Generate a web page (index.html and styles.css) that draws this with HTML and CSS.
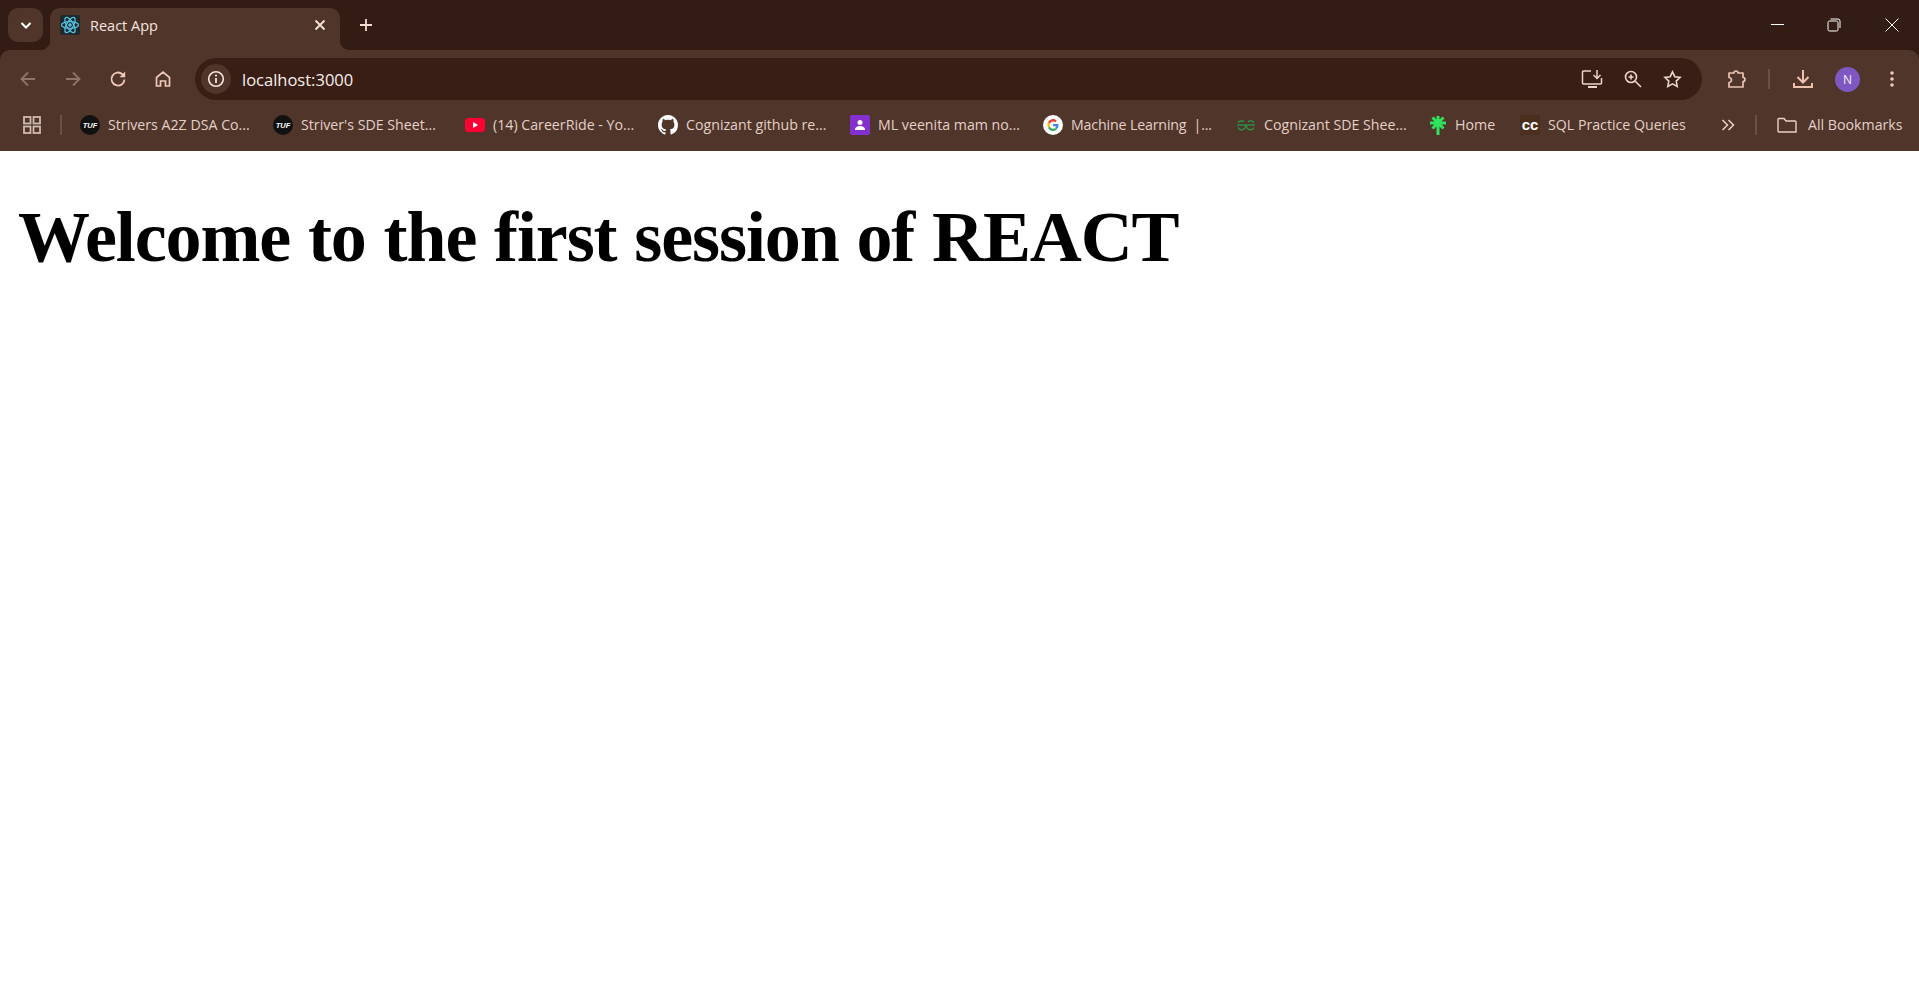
FILE: index.html
```html
<!DOCTYPE html>
<html lang="en">
<head>
    <meta charset="UTF-8">
    <title>React App</title>
    <link rel="stylesheet" href="styles.css">
</head>
<body>
    <div class="chrome">
    <div class="tabstrip">
        <div class="tabsearch">
            <svg width="16" height="16" viewBox="0 0 16 16"><path d="M3.500 6 8 10.500 12.500 6" fill="none" stroke="#fff" stroke-width="2"/></svg>
        </div>
        <div class="tab">
            <svg class="tabicon" width="20" height="20" viewBox="0 0 20 20">
                <rect width="20" height="20" rx="2" fill="#1f2a2e"/>
                <g fill="none" stroke="#53c1de" stroke-width="1.300">
                    <ellipse cx="10" cy="10" rx="8.500" ry="3.400"/>
                    <ellipse cx="10" cy="10" rx="8.500" ry="3.400" transform="rotate(60 10 10)"/>
                    <ellipse cx="10" cy="10" rx="8.500" ry="3.400" transform="rotate(120 10 10)"/>
                </g>
                <circle cx="10" cy="10" r="1.800" fill="#53c1de"/>
            </svg>
            <span class="tabtitle">React App</span>
            <svg class="tabclose" width="12" height="12" viewBox="0 0 12 12"><path d="M1.500 1.500 10.500 10.500M10.500 1.500 1.500 10.500" stroke="#f3e4de" stroke-width="1.800"/></svg>
        </div>
        <svg class="newtab" width="14" height="14" viewBox="0 0 14 14"><path d="M7 1v12M1 7h12" stroke="#f6dcd2" stroke-width="1.800"/></svg>
        <div class="winbtns">
            <svg width="14" height="14" viewBox="0 0 14 14"><path d="M0 6.500h13" stroke="#fff" stroke-width="1"/></svg>
            <svg class="restore" width="14" height="14" viewBox="0 0 14 14" fill="none" stroke="#fff"><rect x="1" y="3" width="10" height="10" rx="1.500"/><path d="M3.500 1h7.500a2 2 0 0 1 2 2v7"/></svg>
            <svg width="14" height="14" viewBox="0 0 14 14"><path d="M.5.500 13.500 13.500M13.500.500 .5 13.500" stroke="#fff" stroke-width="1"/></svg>
        </div>
    </div>

    <div class="toolbar">
        <svg class="tb" width="18" height="18" viewBox="0 0 18 18"><path d="M16 9H2.500M9 2.500 2.500 9 9 15.500" fill="none" stroke="#8d756b" stroke-width="1.800"/></svg>
        <svg class="tb" width="18" height="18" viewBox="0 0 18 18"><path d="M2 9h13.500M9 2.500 15.500 9 9 15.500" fill="none" stroke="#8d756b" stroke-width="1.800"/></svg>
        <svg class="tb" width="18" height="18" viewBox="0 0 18 18"><path d="M15.500 9.500A6.500 6.500 0 1 1 13.500 4.300L15.500 6" fill="none" stroke="#f0c9bb" stroke-width="1.800"/><path d="M16.200 1.500v5.700h-5.700z" fill="#f0c9bb"/></svg>
        <svg class="tb" width="18" height="18" viewBox="0 0 18 18"><path d="M2.500 16V7.500L9 2l6.500 5.500V16h-4v-5h-5v5z" fill="none" stroke="#f0c9bb" stroke-width="1.700"/></svg>
        <div class="omnibox">
            <div class="siteinfo">
                <svg width="18" height="18" viewBox="0 0 18 18"><circle cx="9" cy="9" r="7.300" fill="none" stroke="#f5e3dc" stroke-width="1.600"/><path d="M9 8v5" stroke="#f5e3dc" stroke-width="1.800"/><circle cx="9" cy="5.500" r="1.100" fill="#f5e3dc"/></svg>
            </div>
            <span class="url">localhost:3000</span>
            <div class="omniicons">
                <svg width="22" height="20" viewBox="0 0 22 20" fill="none" stroke="#e9d5cc" stroke-width="1.500"><path d="M10 2H2.500a1 1 0 0 0-1 1v11a1 1 0 0 0 1 1h17a1 1 0 0 0 1-1V9"/><path d="M7 18h9" stroke-width="2"/><path d="M16 1v8M12.500 6l3.500 3.500L19.500 6"/></svg>
                <svg width="18" height="18" viewBox="0 0 18 18" fill="none" stroke="#e9d5cc" stroke-width="1.600"><circle cx="7" cy="7" r="5.500"/><path d="M11 11l6 6M4.500 7h5M7 4.500v5"/></svg>
                <svg width="19" height="18" viewBox="0 0 19 18" fill="none" stroke="#e9d5cc" stroke-width="1.600"><path d="M9.500 1.800l2.300 4.900 5.300.7-3.900 3.700 1 5.300-4.700-2.600-4.700 2.600 1-5.300L1.900 7.400l5.300-.7z"/></svg>
            </div>
        </div>
        <svg class="ext" width="20" height="20" viewBox="0 0 20 20" fill="none" stroke="#eac3b4" stroke-width="1.700"><path d="M2 4h5a2 2 0 1 1 4 0h5v4.500a2 2 0 1 1 0 4V18H2v-4.500a2.500 2.500 0 0 0 0-5z" stroke-linejoin="round"/></svg>
        <div class="tbsep"></div>
        <svg class="dl" width="20" height="20" viewBox="0 0 20 20" fill="none" stroke="#f0c0ae" stroke-width="2"><path d="M10 1v12M4.500 8l5.500 5.500L15.500 8M1 14v4h18v-4"/></svg>
        <div class="avatar">N</div>
        <svg class="kebab" width="6" height="18" viewBox="0 0 6 18"><circle cx="3" cy="3" r="1.800" fill="#f0c9bb"/><circle cx="3" cy="9" r="1.800" fill="#f0c9bb"/><circle cx="3" cy="15" r="1.800" fill="#f0c9bb"/></svg>
    </div>

    <div class="bookmarks">
        <svg class="apps" width="18" height="18" viewBox="0 0 18 18" fill="none" stroke="#cdbab1" stroke-width="1.800"><rect x="1" y="1" width="6.500" height="6.500"/><rect x="10.500" y="1" width="6.500" height="6.500"/><rect x="1" y="10.500" width="6.500" height="6.500"/><rect x="10.500" y="10.500" width="6.500" height="6.500"/></svg>
        <div class="bmsep"></div>
        <div class="bm bm-a2z"><span class="tuf">TUF</span><span class="bmtext">Strivers A2Z DSA Co...</span></div>
        <div class="bm bm-sde"><span class="tuf">TUF</span><span class="bmtext">Striver's SDE Sheet...</span></div>
        <div class="bm bm-yt">
            <svg width="20" height="16" viewBox="0 0 20 16"><rect y="1" width="20" height="14" rx="3.500" fill="#ff0033"/><path d="M8 5l5 3-5 3z" fill="#fff"/></svg>
            <span class="bmtext">(14) CareerRide - Yo...</span>
        </div>
        <div class="bm bm-gh">
            <svg width="20" height="20" viewBox="0 0 16 16"><path fill="#fff" d="M8 0C3.580 0 0 3.580 0 8c0 3.540 2.290 6.530 5.470 7.590.4.070.55-.17.55-.38 0-.19-.01-.82-.01-1.490-2.010.37-2.530-.49-2.690-.94-.09-.23-.48-.94-.82-1.130-.28-.15-.68-.52-.01-.53.630-.01 1.080.58 1.230.82.720 1.210 1.870.87 2.330.66.070-.52.280-.87.510-1.070-1.780-.2-3.640-.89-3.640-3.950 0-.87.310-1.590.820-2.150-.08-.2-.36-1.020.08-2.120 0 0 .67-.21 2.200.82.640-.18 1.320-.27 2-.27s1.360.09 2 .27c1.530-1.040 2.200-.82 2.200-.82.440 1.100.16 1.920.08 2.120.51.560.82 1.270.82 2.150 0 3.070-1.870 3.750-3.650 3.950.29.250.54.730.54 1.480 0 1.070-.01 1.930-.01 2.200 0 .21.150.46.550.38A8.010 8.010 0 0 0 16 8c0-4.420-3.580-8-8-8z"/></svg>
            <span class="bmtext">Cognizant github re...</span>
        </div>
        <div class="bm bm-ml">
            <svg width="20" height="20" viewBox="0 0 20 20"><rect width="20" height="20" rx="2" fill="#8430ce"/><circle cx="10" cy="7.500" r="2.500" fill="#fff"/><path d="M5 15c0-3 2.500-4 5-4s5 1 5 4z" fill="#fff"/></svg>
            <span class="bmtext">ML veenita mam no...</span>
        </div>
        <div class="bm bm-goog">
            <svg width="20" height="20" viewBox="0 0 20 20"><circle cx="10" cy="10" r="10" fill="#fff"/><path d="M15.500 10.200c0-.4 0-.8-.1-1.200H10v2.200h3.100c-.1.700-.5 1.300-1.200 1.700l1.800 1.400c1.100-1 1.800-2.400 1.800-4.100z" fill="#4285f4"/><path d="M10 16c1.500 0 2.800-.5 3.700-1.400l-1.800-1.400c-.5.300-1.100.5-1.900.5-1.500 0-2.700-1-3.100-2.300L5 12.800C5.900 14.700 7.800 16 10 16z" fill="#34a853"/><path d="M6.900 11.400c-.2-.9-.2-1.900 0-2.800L5 7.200c-.8 1.700-.8 3.900 0 5.600z" fill="#fbbc05"/><path d="M10 6.400c.8 0 1.600.3 2.200.8l1.600-1.600C12.800 4.600 11.400 4 10 4 7.800 4 5.900 5.300 5 7.200l1.900 1.400C7.300 7.400 8.500 6.400 10 6.400z" fill="#ea4335"/></svg>
            <span class="bmtext">Machine Learning &nbsp;|...</span>
        </div>
        <div class="bm bm-gfg">
            <svg width="20" height="14" viewBox="0 0 20 14" fill="none" stroke="#2f8d46" stroke-width="1.500"><path d="M1 7h18M9.500 7a4 4 0 0 1-7.500 2.500M2 4.500A4 4 0 0 1 8 4M10.500 7a4 4 0 0 0 7.500 2.500M18 4.500A4 4 0 0 0 12 4"/></svg>
            <span class="bmtext">Cognizant SDE Shee...</span>
        </div>
        <div class="bm bm-home">
            <svg width="18" height="20" viewBox="0 0 18 20" stroke="#2fe35f" stroke-width="3"><path d="M9 1v19M1 8h16M3.500 2.500l11 11M14.500 2.500l-11 11"/></svg>
            <span class="bmtext">Home</span>
        </div>
        <div class="bm bm-sql"><span class="cc">cc</span><span class="bmtext">SQL Practice Queries</span></div>
        <svg class="more" width="14" height="12" viewBox="0 0 14 12" fill="none" stroke="#e6d3ca" stroke-width="1.500"><path d="M1.500 1l5 5-5 5M7.500 1l5 5-5 5"/></svg>
        <div class="bmsep bmsep2"></div>
        <div class="bm bm-all">
            <svg width="20" height="16" viewBox="0 0 20 16" fill="none" stroke="#e6d3ca" stroke-width="1.400"><path d="M1 14V2.500a1 1 0 0 1 1-1h5l2 2.500h9a1 1 0 0 1 1 1V15H2a1 1 0 0 1-1-1z"/></svg>
            <span class="bmtext">All Bookmarks</span>
        </div>
    </div>
    </div>

    <div id="root">
        <h1>Welcome to the first session of REACT</h1>
    </div>
</body>
</html>
```

FILE: styles.css
```css
body {
    margin: 0;
    background-color: white;
    font-family: "Liberation Serif", serif;
    overflow: hidden;
}

.chrome {
    background-color: #331c13;
    font-family: "Open Sans", "Noto Sans", sans-serif;
}

.tabstrip,
.toolbar,
.bookmarks {
    display: flex;
    align-items: center;
}

.tabstrip {
    height: 50px;
    align-items: flex-end;
}

.tabsearch {
    width: 35px;
    height: 34px;
    margin: 0 7px 8px 8px;
    background-color: #50352b;
    border-radius: 10px;
    display: flex;
    align-items: center;
    justify-content: center;
}

.tab {
    position: relative;
    width: 290px;
    height: 42px;
    box-sizing: border-box;
    padding: 0 14px 8px 10px;
    background-color: #50352b;
    border-radius: 10px 10px 0 0;
    display: flex;
    align-items: center;
    color: #f3e4de;
    font-size: 14.5px;
}

.tab::before,
.tab::after {
    content: "";
    position: absolute;
    bottom: 0;
    width: 10px;
    height: 10px;
}

.tab::before {
    left: -10px;
    background: radial-gradient(circle at 0 0, transparent 10px, #50352b 10.500px);
}

.tab::after {
    right: -10px;
    background: radial-gradient(circle at 100% 0, transparent 10px, #50352b 10.500px);
}

.tabtitle {
    margin-left: 10px;
    flex: 1;
}

.newtab {
    margin: 0 0 18px 19px;
}

.winbtns {
    margin-left: auto;
    display: flex;
    align-self: center;
    gap: 42px;
    padding-right: 20px;
}

.restore {
    margin-right: 2px;
}

.toolbar {
    height: 42px;
    padding: 8px 0 4px 19px;
    background-color: #50352b;
    border-radius: 10px 10px 0 0;
}

.tb {
    margin-right: 27px;
}

.omnibox {
    width: 1507px;
    height: 42px;
    margin-left: -4px;
    background-color: #381e15;
    border-radius: 21px;
    display: flex;
    align-items: center;
    padding: 0 20px 0 6px;
    box-sizing: border-box;
}

.siteinfo {
    width: 30px;
    height: 30px;
    border-radius: 50%;
    background-color: #50352b;
    display: flex;
    align-items: center;
    justify-content: center;
}

.url {
    margin-left: 11px;
    color: #f8eeea;
    font-size: 16.500px;
}

.omniicons {
    margin-left: auto;
    display: flex;
    align-items: center;
    gap: 21px;
}

.ext {
    margin-left: 25px;
}

.tbsep {
    width: 2px;
    height: 20px;
    margin: 0 23px 0 21px;
    background-color: #6b5045;
}

.avatar {
    width: 25px;
    height: 25px;
    margin-left: 22px;
    border-radius: 50%;
    background-color: #7e57c2;
    color: #f3ecf8;
    font-size: 12px;
    display: flex;
    align-items: center;
    justify-content: center;
}

.kebab {
    margin-left: 29px;
}

.bookmarks {
    height: 42px;
    padding: 0 0 5px 23px;
    background-color: #50352b;
    color: #e3d0c7;
    font-size: 14.200px;
}

.bm {
    display: flex;
    align-items: center;
    gap: 8px;
    white-space: nowrap;
}

.bmtext {
    margin-bottom: 2px;
}

.bmsep {
    width: 2px;
    height: 20px;
    margin: 0 18px 0 19px;
    background-color: #6b5045;
}

.tuf {
    width: 20px;
    height: 20px;
    border-radius: 50%;
    background-color: #111;
    color: #fff;
    font-family: "Liberation Sans", sans-serif;
    font-size: 7.500px;
    font-weight: 700;
    font-style: italic;
    display: flex;
    align-items: center;
    justify-content: center;
}

.cc {
    width: 20px;
    color: #fff;
    font-family: "Liberation Sans", sans-serif;
    font-size: 15px;
    font-weight: 700;
    line-height: 20px;
    text-align: center;
    background-color: #4a2f1f;
}

.bm-a2z { width: 193px; }
.bm-sde { width: 192px; }
.bm-yt { width: 193px; }
.bm-gh { width: 192px; }
.bm-ml { width: 193px; }
.bm-goog { width: 193px; letter-spacing: -0.150px; }
.bm-gfg { width: 193px; }
.bm-home { width: 91px; }
.bm-sql { width: 201px; }

.bmsep2 {
    margin: 0 20px;
}

.bm-all {
    gap: 11px;
}

#root {
    padding: 8px 18px;
}

h1 {
    margin: 37px 0;
    font-size: 72px;
    line-height: 83px;
    letter-spacing: -1.100px;
    word-spacing: 0.900px;
    color: black;
}
```
